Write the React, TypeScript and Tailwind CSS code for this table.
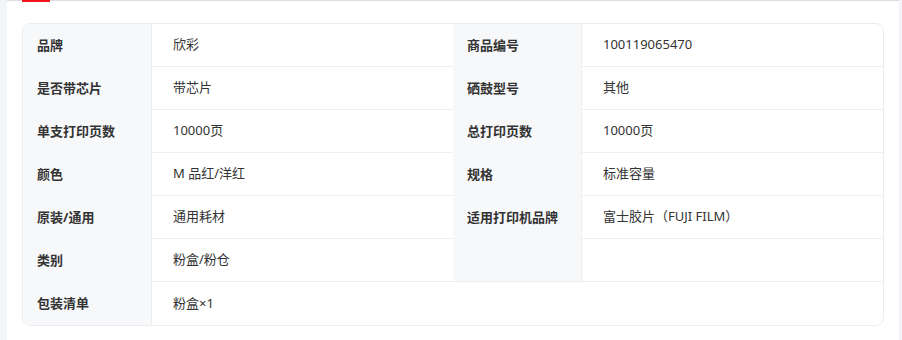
import React from "react";

type Cell = { label: string; value: string };
const rows: [Cell, Cell | null][] = [
  [{ label: "品牌", value: "欣彩" }, { label: "商品编号", value: "100119065470" }],
  [{ label: "是否带芯片", value: "带芯片" }, { label: "硒鼓型号", value: "其他" }],
  [{ label: "单支打印页数", value: "10000页" }, { label: "总打印页数", value: "10000页" }],
  [{ label: "颜色", value: "M 品红/洋红" }, { label: "规格", value: "标准容量" }],
  [{ label: "原装/通用", value: "通用耗材" }, { label: "适用打印机品牌", value: "富士胶片（FUJI FILM）" }],
  [{ label: "类别", value: "粉盒/粉仓" }, { label: "", value: "" }],
];

const font = { fontFamily: '"Noto Sans", "Noto Sans CJK SC", sans-serif' };

export default function App() {
  return (
    <div className="flex h-[340px] w-[902px] bg-[#f4f5f9]" style={font}>
      <div className="w-[7px] shrink-0" />
      <div className="relative flex-1 border-t border-[#dcdde3] bg-white px-[15px] pt-[22px]">
        <div className="absolute left-[15px] top-[-1px] h-[2px] w-[28px] bg-[#f0141e]" />
        <div className="overflow-hidden rounded-[8px] border border-[#ebedf0] text-[13px] text-[#333]">
          <div className="grid grid-cols-[129px_301px_129px_301px]">
            {rows.map(([a, b], i) => (
              <React.Fragment key={i}>
                <div className="flex h-[43px] items-center border-r border-[#eeeeee] bg-[#f7f8fa] pl-[14px] font-bold">
                  {a.label}
                </div>
                <div className="flex h-[43px] items-center border-b border-[#eeeeee] pl-[21px]">
                  {a.value}
                </div>
                <div
                  className={
                    "flex h-[43px] items-center border-r border-[#eeeeee] bg-[#f7f8fa] pl-[14px] font-bold" +
                    (i === rows.length - 1 ? " border-b" : "")
                  }
                >
                  {b?.label}
                </div>
                <div className="flex h-[43px] items-center border-b border-[#eeeeee] pl-[21px]">
                  {b?.value}
                </div>
              </React.Fragment>
            ))}
            <div className="flex h-[43px] items-center border-r border-[#eeeeee] bg-[#f7f8fa] pl-[14px] font-bold">
              包装清单
            </div>
            <div className="col-span-3 flex h-[43px] items-center pl-[21px]">粉盒×1</div>
          </div>
        </div>
      </div>
      <div className="w-[4px] shrink-0" />
    </div>
  );
}
